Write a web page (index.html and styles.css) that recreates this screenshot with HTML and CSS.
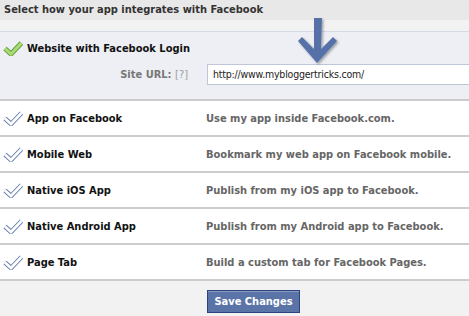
FILE: index.html
```html
<!DOCTYPE html>
<html lang="en">
<head>
  <meta charset="UTF-8">
  <title>App Integration</title>
  <link rel="stylesheet" href="styles.css">
</head>
<body>
  <div class="page">
    <div class="panel-title">Select how your app integrates with Facebook</div>

    <div class="integration-list">
      <div class="option option-selected">
        <div class="option-head">
          <svg class="check" viewBox="0 0 20 16" width="20" height="16">
            <polyline points="2,8.5 8,14 18.5,3" fill="none" stroke="#6a9e3c" stroke-width="5"/>
            <polyline points="2,8.5 8,14 18.5,3" fill="none" stroke="#a9dc78" stroke-width="3"/>
          </svg>
          <span class="option-name">Website with Facebook Login</span>
        </div>
        <div class="field">
          <label class="field-label">Site URL: <span class="help">[?]</span></label>
          <div class="field-input">http://www.mybloggertricks.com/</div>
        </div>
      </div>

      <div class="option">
        <svg class="check" viewBox="0 0 20 16" width="20" height="16">
          <polyline points="2,8.5 8,14 18.5,3" fill="none" stroke="#5d76ad" stroke-width="4.6"/>
          <polyline points="2,8.5 8,14 18.5,3" fill="none" stroke="#fff" stroke-width="2.8"/>
        </svg>
        <span class="option-name">App on Facebook</span>
        <span class="option-desc">Use my app inside Facebook.com.</span>
      </div>

      <div class="option">
        <svg class="check" viewBox="0 0 20 16" width="20" height="16">
          <polyline points="2,8.5 8,14 18.5,3" fill="none" stroke="#5d76ad" stroke-width="4.6"/>
          <polyline points="2,8.5 8,14 18.5,3" fill="none" stroke="#fff" stroke-width="2.8"/>
        </svg>
        <span class="option-name">Mobile Web</span>
        <span class="option-desc">Bookmark my web app on Facebook mobile.</span>
      </div>

      <div class="option">
        <svg class="check" viewBox="0 0 20 16" width="20" height="16">
          <polyline points="2,8.5 8,14 18.5,3" fill="none" stroke="#5d76ad" stroke-width="4.6"/>
          <polyline points="2,8.5 8,14 18.5,3" fill="none" stroke="#fff" stroke-width="2.8"/>
        </svg>
        <span class="option-name">Native iOS App</span>
        <span class="option-desc">Publish from my iOS app to Facebook.</span>
      </div>

      <div class="option">
        <svg class="check" viewBox="0 0 20 16" width="20" height="16">
          <polyline points="2,8.5 8,14 18.5,3" fill="none" stroke="#5d76ad" stroke-width="4.6"/>
          <polyline points="2,8.5 8,14 18.5,3" fill="none" stroke="#fff" stroke-width="2.8"/>
        </svg>
        <span class="option-name">Native Android App</span>
        <span class="option-desc">Publish from my Android app to Facebook.</span>
      </div>

      <div class="option">
        <svg class="check" viewBox="0 0 20 16" width="20" height="16">
          <polyline points="2,8.5 8,14 18.5,3" fill="none" stroke="#5d76ad" stroke-width="4.6"/>
          <polyline points="2,8.5 8,14 18.5,3" fill="none" stroke="#fff" stroke-width="2.8"/>
        </svg>
        <span class="option-name">Page Tab</span>
        <span class="option-desc">Build a custom tab for Facebook Pages.</span>
      </div>
    </div>

    <div class="footer">
      <button class="save-btn">Save Changes</button>
    </div>

    <!-- pointer arrow drawn over the form -->
    <svg class="pointer" viewBox="0 0 44 50" width="44" height="50">
      <defs>
        <filter id="shade" x="-30%" y="-30%" width="160%" height="160%">
          <feDropShadow dx="1.5" dy="1.5" stdDeviation="1.2" flood-color="#000" flood-opacity="0.35"/>
        </filter>
      </defs>
      <polygon points="16,1 24,1 23,32 35,20 39,24 19,46 0,24 4,20 16,32" fill="#5671a8" filter="url(#shade)"/>
    </svg>
  </div>
</body>
</html>
```

FILE: styles.css
```css
body {
  margin: 0;
  background-color: #f2f2f2;
  font-family: "DejaVu Sans Condensed", "DejaVu Sans", sans-serif;
  font-size: 11px;
  color: #333;
}

.page {
  position: relative;
  width: 469px;
  height: 316px;
  overflow: hidden;
}

.panel-title {
  height: 20px;
  line-height: 20px;
  padding-left: 4px;
  background-color: #e8e8e8;
  font-weight: bold;
  color: #333;
}

.integration-list {
  margin-top: 11px;
  border-top: 1px solid #d3d9e6;
}

.option {
  display: flex;
  align-items: center;
  height: 34px;
  background-color: #fff;
  border-top: 2px solid #cccccc;
  font-weight: bold;
}

.option:last-child {
  border-bottom: 2px solid #cccccc;
}

.option-selected {
  display: block;
  height: auto;
  padding: 8px 0 14px;
  background-color: #edeff4;
  border-top: none;
}

.option-head {
  display: flex;
  align-items: center;
}

.check {
  flex: none;
  margin: 0 4px 0 3px;
}

.option-name {
  width: 179px;
  flex: none;
  color: #111;
}

.option-desc {
  color: #666;
}

.field {
  display: flex;
  align-items: center;
  margin-top: 8px;
}

.field-label {
  width: 188px;
  flex: none;
  text-align: right;
  color: #777;
  font-weight: bold;
}

.help {
  color: #a0a0a0;
  font-weight: normal;
}

.field-input {
  flex: none;
  width: 280px;
  height: 19px;
  line-height: 19px;
  margin-left: 19px;
  padding-left: 5px;
  background-color: #fff;
  border: 1px solid #bdc7d8;
  border-right: none;
  color: #222;
  font-size: 10.5px;
  font-weight: normal;
  letter-spacing: -0.2px;
}

.footer {
  padding: 9px 0 0 207px;
}

.save-btn {
  width: 93px;
  height: 23px;
  padding: 0;
  background-color: #5b74a8;
  border: 1px solid #29447e;
  box-shadow: inset 0 1px 0 #8a9cc2;
  color: #fff;
  font-family: inherit;
  font-size: 11px;
  font-weight: bold;
}

.pointer {
  position: absolute;
  left: 298px;
  top: 17px;
}
```
